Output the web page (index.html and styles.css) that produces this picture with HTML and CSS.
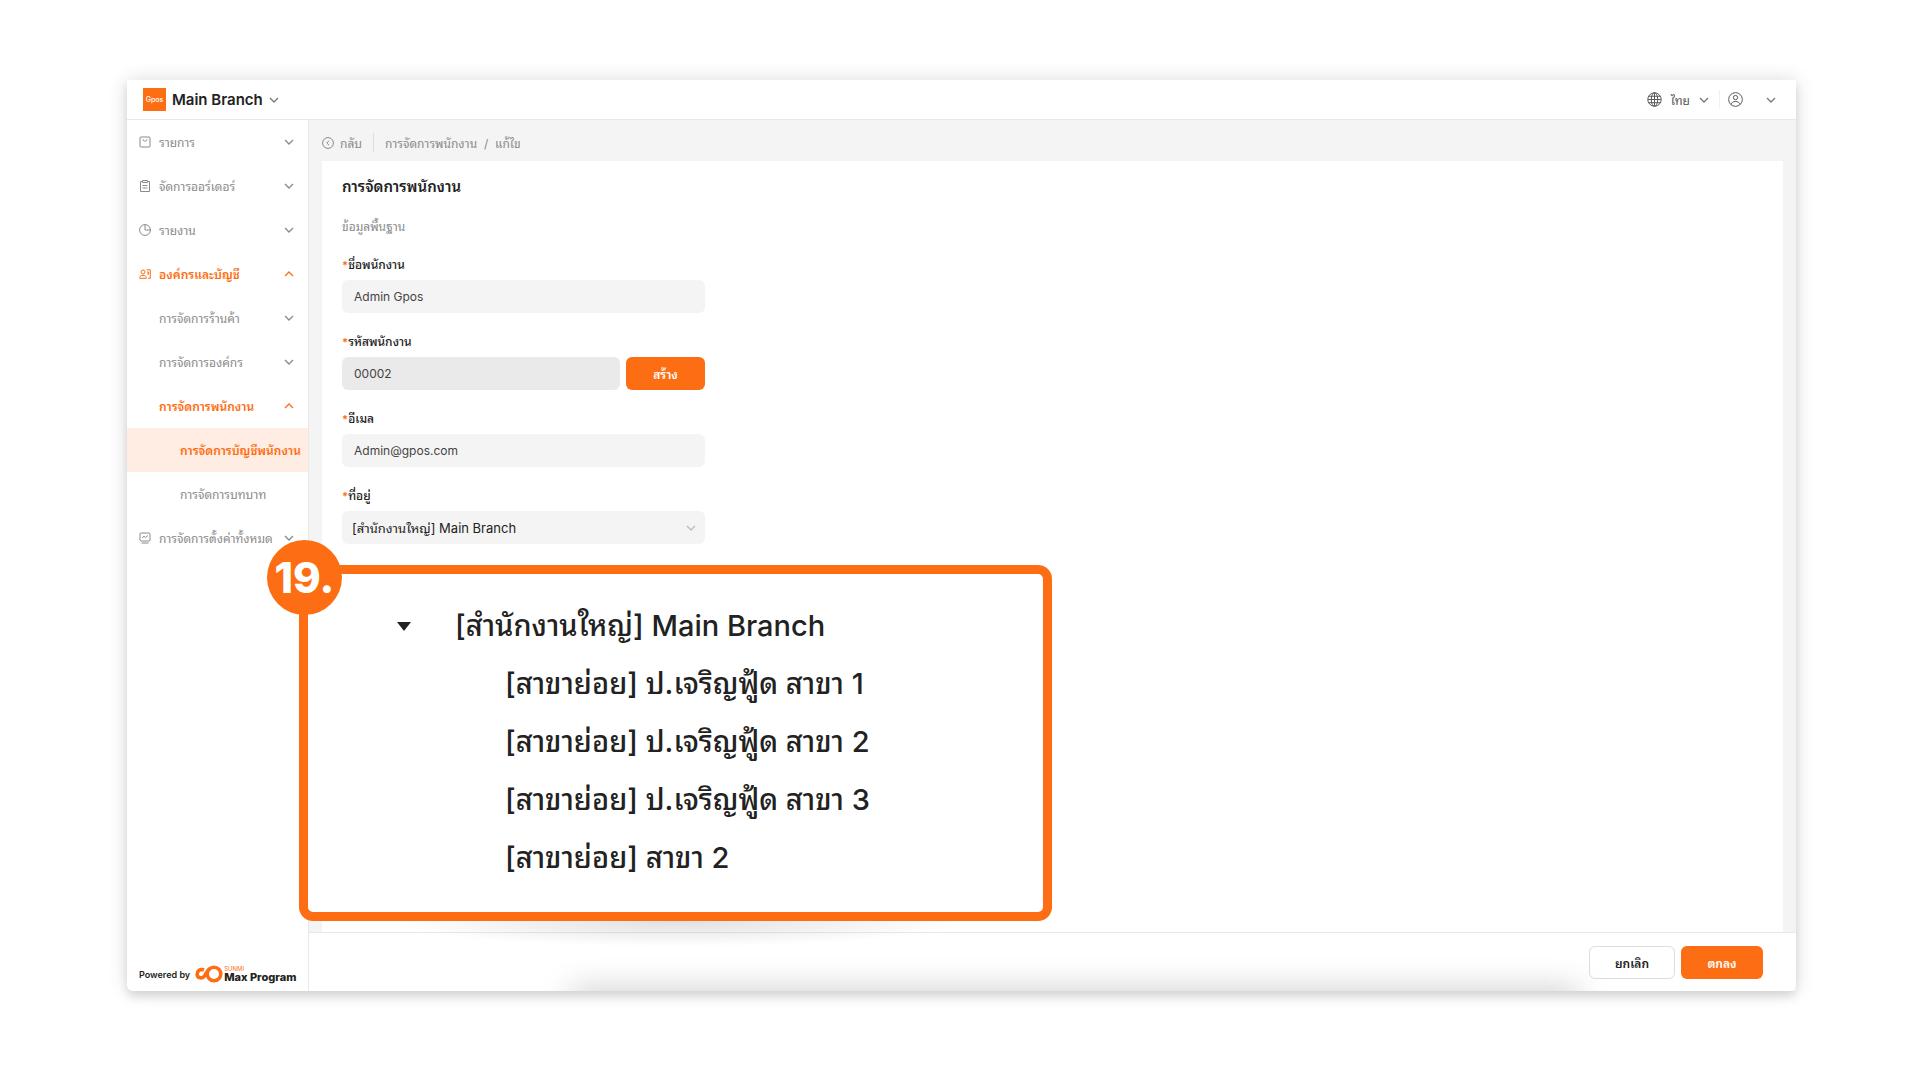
FILE: index.html
```html
<!DOCTYPE html>
<html lang="th">
<head>
  <meta charset="UTF-8" />
  <meta name="viewport" content="width=device-width, initial-scale=1.0"/>
  <title>การจัดการพนักงาน</title>
  <link rel="stylesheet" href="styles.css">
</head>
<body>
  <!-- shared icons -->
  <svg width="0" height="0" class="sprite" aria-hidden="true">
    <symbol id="chevron" viewBox="0 0 10 6"><path d="M1 1l4 4 4-4" /></symbol>
    <symbol id="chevron-up" viewBox="0 0 10 6"><path d="M1 5l4-4 4 4" /></symbol>
  </svg>

  <div class="window">
    <header class="topbar">
      <button type="button" class="branch">
        <span class="logo">Gpos</span>
        Main Branch
        <svg class="chev"><use href="#chevron" /></svg>
      </button>
      <div class="tools">
        <button type="button" class="lang">
          <svg class="icon" viewBox="0 0 14 14"><circle cx="7" cy="7" r="6.3" /><ellipse cx="7" cy="7" rx="3" ry="6.3" /><path d="M7 1v12M1 7h12M1.700 4h10.600M1.700 10h10.600" /></svg>
          ไทย
          <svg class="chev"><use href="#chevron" /></svg>
        </button>
        <button type="button" class="user" aria-label="User">
          <svg class="icon" viewBox="0 0 14 14"><circle cx="7" cy="7" r="6.4" /><circle cx="7" cy="5.2" r="2" /><path d="M3 11.8c0-4 8-4 8 0" /></svg>
          <svg class="chev"><use href="#chevron" /></svg>
        </button>
      </div>
    </header>

    <div class="body">
      <aside class="sidebar">
        <nav>
          <a href="#" class="item">
            <svg class="icon" viewBox="0 0 12 12"><rect x="1" y="1" width="10" height="10" rx="1" /><path d="M4 3.2c0 2.6 4 2.6 4 0" /></svg>
            <span>รายการ</span>
            <svg class="chev"><use href="#chevron" /></svg>
          </a>
          <a href="#" class="item">
            <svg class="icon" viewBox="0 0 12 12"><path d="M3.5 1.5h-2v10h9v-10h-2M3.5.5h5v2h-5zM3.5 5.5h5M3.5 8h5" /></svg>
            <span>จัดการออร์เดอร์</span>
            <svg class="chev"><use href="#chevron" /></svg>
          </a>
          <a href="#" class="item">
            <svg class="icon" viewBox="0 0 12 12"><circle cx="6" cy="6" r="5.4" /><path d="M6 .6V6h5.4" /></svg>
            <span>รายงาน</span>
            <svg class="chev"><use href="#chevron" /></svg>
          </a>
          <a href="#" class="item open">
            <svg class="icon" viewBox="0 0 12 12"><circle cx="4" cy="4" r="2" /><path d="M.7 10.3V9.6c0-3 6.600-3 6.600 0v.7zM7.500 1.800h3.800v8.500H9M8 4h1.600v2H8" /></svg>
            <span>องค์กรและบัญชี</span>
            <svg class="chev"><use href="#chevron-up" /></svg>
          </a>
          <a href="#" class="item sub"><span>การจัดการร้านค้า</span> <svg class="chev"><use href="#chevron" /></svg></a>
          <a href="#" class="item sub"><span>การจัดการองค์กร</span> <svg class="chev"><use href="#chevron" /></svg></a>
          <a href="#" class="item sub open"><span>การจัดการพนักงาน</span> <svg class="chev"><use href="#chevron-up" /></svg></a>
          <a href="#" class="item leaf active"><span>การจัดการบัญชีพนักงาน</span></a>
          <a href="#" class="item leaf"><span>การจัดการบทบาท</span></a>
          <a href="#" class="item">
            <svg class="icon" viewBox="0 0 12 12"><rect x="1" y="1" width="10" height="8" rx="1" /><path d="M3 6l2-1.800 1.500 1.300L9 3.500M2.500 11h7" /></svg>
            <span>การจัดการตั้งค่าทั้งหมด</span>
            <svg class="chev"><use href="#chevron" /></svg>
          </a>
        </nav>
        <div class="powered">
          <span>Powered by</span>
          <svg class="loop" viewBox="0 0 28 18"><path d="M9 5C5 3.500 2.200 6 2.200 9.200c0 4.300 5.300 4.800 7.300 1.800C11 8.500 12 5 15 3.500" /><circle cx="19" cy="9" r="6.800" /></svg>
          <span class="brand"><small>SUNMI</small>Max Program</span>
        </div>
      </aside>

      <main class="main">
        <div class="crumbs">
          <a href="#" class="back">
            <svg class="icon" viewBox="0 0 12 12"><circle cx="6" cy="6" r="5.400" /><path d="M7 3.800L4.800 6 7 8.200" /></svg>
            กลับ
          </a>
          <span class="path">การจัดการพนักงาน&nbsp; /&nbsp; แก้ไข</span>
        </div>

        <form class="card" id="form">
          <h1>การจัดการพนักงาน</h1>
          <h2>ข้อมูลพื้นฐาน</h2>

          <div class="field">
            <label for="name"><b>*</b>ชื่อพนักงาน</label>
            <input type="text" id="name" value="Admin Gpos" />
          </div>
          <div class="field">
            <label for="code"><b>*</b>รหัสพนักงาน</label>
            <div class="row">
              <input type="text" id="code" value="00002" readonly />
              <button type="button" class="btn primary">สร้าง</button>
            </div>
          </div>
          <div class="field">
            <label for="email"><b>*</b>อีเมล</label>
            <input type="text" id="email" value="Admin@gpos.com" />
          </div>
          <div class="field">
            <label for="place"><b>*</b>ที่อยู่</label>
            <div class="row select">
              <select id="place">
                <option>[สำนักงานใหญ่] Main Branch</option>
              </select>
              <svg class="chev"><use href="#chevron" /></svg>

              <!-- branch tree, enlarged with step number -->
              <div class="callout">
                <span class="step">19.</span>
                <ul class="tree">
                  <li class="root"><svg class="caret" viewBox="0 0 14 9"><path d="M0 0h14L7 9z" /></svg>[สำนักงานใหญ่] Main Branch</li>
                  <li>[สาขาย่อย] ป.เจริญฟู้ด สาขา 1</li>
                  <li>[สาขาย่อย] ป.เจริญฟู้ด สาขา 2</li>
                  <li>[สาขาย่อย] ป.เจริญฟู้ด สาขา 3</li>
                  <li>[สาขาย่อย] สาขา 2</li>
                </ul>
              </div>
            </div>
          </div>
        </form>

        <footer class="actions">
          <button type="button" class="btn">ยกเลิก</button>
          <button type="submit" form="form" class="btn primary">ตกลง</button>
        </footer>
      </main>
    </div>
  </div>
</body>
</html>
```
FILE: styles.css
```css
* {
  box-sizing: border-box;
}
body {
  margin: 0;
  min-height: 100vh;
  padding: 80px 124px 89px 127px;
  display: flex;
  background: #fff;
  color: #222;
  font-family: Inter, "Noto Sans Thai Looped", "Noto Looped Thai", Loma, "Noto Sans Thai", "Noto Sans", sans-serif;
  font-size: 12px;
}
button, input, select {
  font: inherit;
  color: inherit;
  border: 0;
  background: none;
  padding: 0;
}
a {
  color: inherit;
  text-decoration: none;
}
svg {
  fill: none;
  stroke: currentColor;
  flex: none;
}
.sprite {
  position: absolute;
}
.icon {
  width: 12px;
  height: 12px;
}
.chev {
  width: 10px;
  height: 6px;
  stroke-width: 1.3;
}

.window {
  flex: 1;
  display: flex;
  flex-direction: column;
  border-radius: 0 0 6px 6px;
  background: #fff;
  box-shadow: 0 0 20px rgba(0,0,0,0.14), 0 6px 8px rgba(0,0,0,0.1);
}
.topbar {
  height: 40px;
  display: flex;
  justify-content: space-between;
  align-items: center;
  padding: 0 20px 0 16px;
  border-bottom: 1px solid #e8e8e8;
}
.branch {
  display: flex;
  align-items: center;
  gap: 6px;
  font-size: 15px;
  font-weight: 600;
}
.branch .chev, .tools .chev {
  color: #777;
}
.logo {
  width: 23px;
  height: 23px;
  line-height: 23px;
  background: #fd6e14;
  color: #fff;
  font-size: 7px;
  font-weight: 500;
  text-align: center;
}
.tools, .lang, .user {
  display: flex;
  align-items: center;
  color: #555;
}
.tools .icon {
  width: 15px;
  height: 15px;
  stroke-width: 0.9;
}
.lang {
  gap: 9px;
  padding-right: 10px;
  border-right: 1px solid #f0f0f0;
}
.user {
  gap: 23px;
  padding-left: 8px;
}

.body {
  flex: 1;
  display: flex;
}
.sidebar {
  width: 182px;
  flex: none;
  display: flex;
  flex-direction: column;
  justify-content: space-between;
  border-right: 1px solid #e8e8e8;
}
.item {
  height: 44px;
  display: flex;
  align-items: center;
  gap: 8px;
  padding: 0 14px 0 12px;
  color: #8a8a8a;
  white-space: nowrap;
}
.item span {
  padding-bottom: 2px;
}
.item .chev {
  margin-left: auto;
}
.sub {
  padding-left: 32px;
}
.leaf {
  padding-left: 53px;
}
.open, .active {
  color: #fd6e14;
  font-weight: 600;
}
.active {
  background: #ffede3;
}
.powered {
  display: flex;
  align-items: center;
  gap: 5px;
  padding: 0 0 8px 12px;
  font-size: 9px;
  font-weight: 600;
  white-space: nowrap;
}
.loop {
  width: 28px;
  height: 18px;
  margin-right: -4px;
  stroke: #fd6e14;
  stroke-width: 3.6;
}
.brand {
  font-size: 11px;
  font-weight: 800;
  line-height: 10px;
}
.brand small {
  display: block;
  color: #fd6e14;
  font-size: 6px;
  font-weight: 400;
  line-height: 6px;
}

.main {
  flex: 1;
  min-width: 0;
  display: flex;
  flex-direction: column;
  background: #f4f4f4;
}
.crumbs {
  height: 41px;
  display: flex;
  align-items: center;
  padding: 4px 0 0 13px;
  color: #8a8a8a;
}
.back {
  display: flex;
  align-items: center;
  gap: 6px;
  padding-right: 11px;
  border-right: 1px solid #ddd;
}
.path {
  padding-left: 11px;
}
.card {
  flex: 1;
  margin: 0 13px;
  padding: 15px 20px;
  background: #fff;
}
h1, h2 {
  margin: 0;
}
h1 {
  font-size: 15px;
  font-weight: 600;
  line-height: 22px;
}
h2 {
  margin: 18px 0;
  color: #8a8a8a;
  font-size: 12px;
  font-weight: 400;
  line-height: 22px;
}
.field {
  width: 363px;
  margin-bottom: 20px;
}
.field label {
  display: block;
  height: 24px;
  line-height: 18px;
  font-weight: 500;
}
.field b {
  color: #fd6e14;
  font-size: 11px;
}
.field input, .field select {
  display: block;
  width: 100%;
  height: 33px;
  padding: 0 12px;
  border-radius: 6px;
  background: #f4f4f4;
  color: #444;
  font-size: 12px;
  font-weight: 400;
}
.field input[readonly] {
  background: #eaeaea;
}
.row {
  display: flex;
  gap: 6px;
}
.select {
  position: relative;
}
.field select {
  appearance: none;
  padding: 0 10px;
  color: #222;
  font-size: 13px;
}
.select > .chev {
  position: absolute;
  right: 9px;
  top: 14px;
  color: #bbb;
}
.btn {
  height: 33px;
  min-width: 79px;
  border-radius: 6px;
  font-weight: 600;
}
.btn.primary {
  background: #fd6e14;
  color: #fff;
}

.callout {
  position: absolute;
  z-index: 1;
  left: -43px;
  top: 54px;
  width: 753px;
  padding: 23px 80px 25px;
  border: 9px solid #fd6e14;
  border-radius: 14px;
  background: #fff;
}
/* soft shadow below the callout */
.callout::after {
  content: "";
  position: absolute;
  left: 80px;
  right: 80px;
  top: 100%;
  height: 26px;
  margin-top: 9px;
  background: radial-gradient(ellipse at top, rgba(0,0,0,0.12), transparent 70%);
}
.step {
  position: absolute;
  left: -41px;
  top: -34px;
  width: 75px;
  height: 75px;
  border-radius: 50%;
  background: #fd6e14;
  color: #fff;
  font-family: Inter, sans-serif;
  font-size: 42px;
  font-weight: 800;
  line-height: 75px;
  text-align: center;
}
.tree {
  list-style: none;
  margin: 0;
  padding: 0;
  font-size: 29px;
  font-weight: 500;
  line-height: 58px;
  white-space: nowrap;
}
.tree li {
  padding-left: 117px;
}
.tree .root {
  display: flex;
  align-items: center;
  gap: 44px;
  padding-left: 9px;
}
.caret {
  width: 14px;
  height: 9px;
  fill: #222;
  stroke: none;
}

.actions {
  position: relative;
  height: 59px;
  display: flex;
  justify-content: flex-end;
  align-items: center;
  gap: 6px;
  padding: 0 33px;
  border-top: 1px solid #e8e8e8;
  border-radius: 0 0 6px 0;
  background: #fff;
  overflow: hidden;
}
/* shade rising from the bottom edge */
.actions::after {
  content: "";
  position: absolute;
  left: 260px;
  right: 215px;
  top: 100%;
  height: 20px;
  border-radius: 16px;
  box-shadow: 0 0 32px rgba(0,0,0,0.25);
}
.actions .btn {
  position: relative;
  width: 82px;
}
.actions .btn:not(.primary) {
  width: 86px;
  border: 1px solid #ddd;
  background: #fff;
}
```
